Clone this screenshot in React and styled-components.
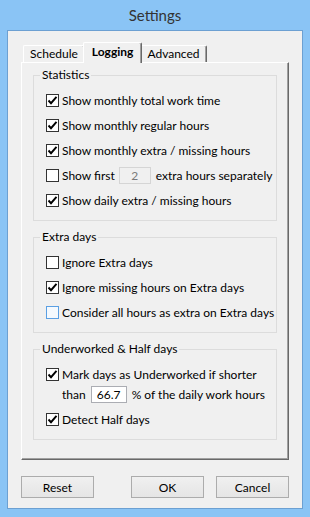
import React from 'react';
import styled, { createGlobalStyle } from 'styled-components';

const Global = createGlobalStyle`
  html, body {
    margin: 0;
    padding: 0;
    background: #8AC4F5;
  }
  body {
    font-family: 'Lato', 'Liberation Sans', sans-serif;
    font-size: 12px;
    color: #000;
  }
`;

const Frame = styled.div`
  width: 310px;
  height: 517px;
  box-sizing: border-box;
  background: #8AC4F5;
  display: flex;
  flex-direction: column;
  padding: 0 7px 8px;
`;

const TitleBar = styled.div`
  height: 30px;
  display: flex;
  align-items: center;
  justify-content: center;
  font-size: 15px;
  color: #333;
`;

const Client = styled.div`
  flex: 1;
  background: #F0F0F0;
  border: 1px solid #6CA0D2;
  padding: 11px 13px 0;
  display: flex;
  flex-direction: column;
`;

const TabStrip = styled.div`
  height: 20px;
  display: flex;
  align-items: flex-end;
  padding-left: 2px;
`;

const Tab = styled.div`
  box-sizing: border-box;
  height: ${p => (p.$active ? '21px' : '17px')};
  margin: ${p => (p.$active ? '0 -2px -1px' : '0')};
  padding: ${p => (p.$active ? '0 8px 3px' : '0 6px 2px')};
  display: flex;
  align-items: center;
  position: relative;
  z-index: ${p => (p.$active ? 1 : 0)};
  background: #F0F0F0;
  border-top: 1px solid #FFF;
  border-left: 1px solid #FFF;
  border-right: 1px solid #696969;
  box-shadow: inset -1px 0 #A0A0A0;
  border-radius: 2px 2px 0 0;
  font-weight: ${p => (p.$active ? 700 : 400)};
`;

const Panel = styled.div`
  height: 398px;
  box-sizing: border-box;
  border-top: 1px solid #FFF;
  border-left: 1px solid #FFF;
  border-right: 1px solid #696969;
  border-bottom: 1px solid #696969;
  box-shadow: inset -1px -1px #A0A0A0;
  padding: 5px 11px 0;
  display: flex;
  flex-direction: column;
  gap: 9px;
`;

const Group = styled.fieldset`
  margin: 0;
  border: 1px solid #DCDCDC;
  padding: 6px 0 7px 6px;
  min-width: 0;
`;

const Legend = styled.legend`
  padding: 0 2px;
  line-height: 14px;
`;

const Row = styled.div`
  height: 25px;
  display: flex;
  align-items: center;
  padding-left: ${p => (p.$indent ? '22px' : '6px')};
  margin-top: ${p => (p.$tight ? '-5px' : '0')};
  white-space: nowrap;
`;

const Box = styled.span`
  width: 13px;
  height: 13px;
  box-sizing: border-box;
  border: 1px solid ${p => (p.$hot ? '#5A9FE3' : '#333')};
  background: ${p => (p.$hot ? '#F4F9FE' : '#FFF')};
  margin-right: 3px;
  display: flex;
  align-items: center;
  justify-content: center;
  flex: none;
`;

const Field = styled.span`
  width: ${p => p.$w}px;
  height: 17px;
  box-sizing: border-box;
  border: 1px solid ${p => (p.$disabled ? '#D5D5D5' : '#ABADB3')};
  background: ${p => (p.$disabled ? '#F0F0F0' : '#FFF')};
  color: ${p => (p.$disabled ? '#7A7A7A' : '#000')};
  display: flex;
  align-items: center;
  justify-content: center;
  margin: 0 5px 0 ${p => p.$ml}px;
  flex: none;
`;

const Buttons = styled.div`
  margin-top: 16px;
  display: flex;
  gap: 12px;
`;

const Button = styled.button`
  width: 73px;
  height: 22px;
  border: 1px solid #ACACAC;
  background: linear-gradient(#F0F0F0, #E5E5E5);
  font-family: inherit;
  font-size: 12px;
  color: #000;
  padding: 0;
  margin-right: ${p => (p.$push ? 'auto' : '0')};
`;

const Check = ({ checked, hot }) => (
  <Box $hot={hot}>
    {checked && (
      <svg width="11" height="11" viewBox="0 0 11 11">
        <path d="M1.5 5.5 L4 8.2 L9.5 1.8" fill="none" stroke="#000" strokeWidth="1.9" />
      </svg>
    )}
  </Box>
);

const Option = ({ checked, hot, children }) => (
  <Row>
    <Check checked={checked} hot={hot} />
    {children}
  </Row>
);

export default function App() {
  return (
    <>
      <Global />
      <Frame>
        <TitleBar>Settings</TitleBar>
        <Client>
          <TabStrip>
            <Tab>Schedule</Tab>
            <Tab $active>Logging</Tab>
            <Tab>Advanced</Tab>
          </TabStrip>
          <Panel>
            <Group>
              <Legend>Statistics</Legend>
              <Option checked>Show monthly total work time</Option>
              <Option checked>Show monthly regular hours</Option>
              <Option checked>Show monthly extra / missing hours</Option>
              <Option>
                Show first <Field $disabled $w={32} $ml={4}>2</Field> extra hours separately
              </Option>
              <Option checked>Show daily extra / missing hours</Option>
            </Group>
            <Group>
              <Legend>Extra days</Legend>
              <Option>Ignore Extra days</Option>
              <Option checked>Ignore missing hours on Extra days</Option>
              <Option hot>Consider all hours as extra on Extra days</Option>
            </Group>
            <Group>
              <Legend>Underworked &amp; Half days</Legend>
              <Option checked>Mark days as Underworked if shorter</Option>
              <Row $indent $tight>
                than <Field $w={36} $ml={5}>66.7</Field> % of the daily work hours
              </Row>
              <Option checked>Detect Half days</Option>
            </Group>
          </Panel>
          <Buttons>
            <Button $push>Reset</Button>
            <Button>OK</Button>
            <Button>Cancel</Button>
          </Buttons>
        </Client>
      </Frame>
    </>
  );
}
